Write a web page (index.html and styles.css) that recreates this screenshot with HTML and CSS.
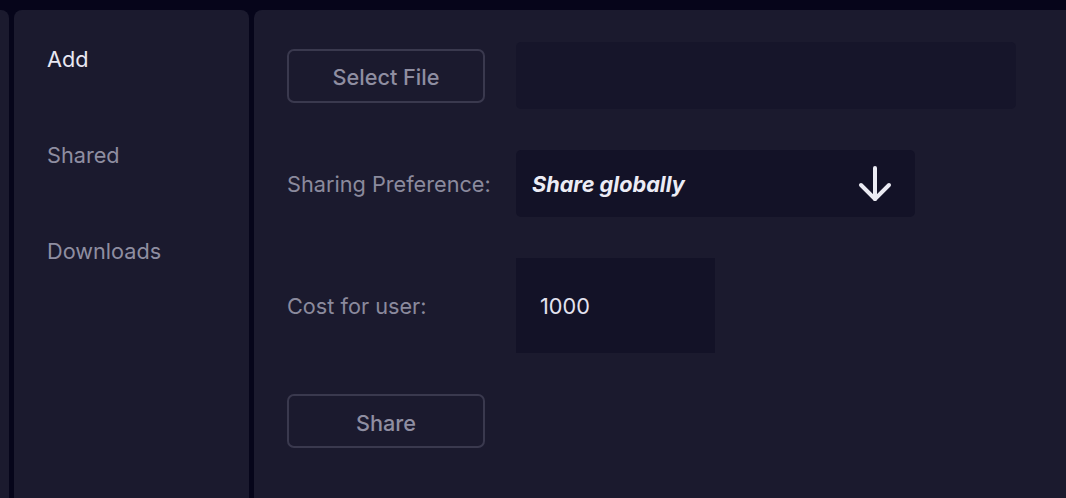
FILE: index.html
```html
<!DOCTYPE html>
<html>
<head>
<meta charset="utf-8">
<link rel="stylesheet" href="styles.css">
</head>
<body>
<div class="shell">
  <div class="card edge"></div>
  <nav class="card sidebar">
    <div class="nav-item active">Add</div>
    <div class="nav-item">Shared</div>
    <div class="nav-item">Downloads</div>
  </nav>
  <main class="card main">
    <div class="form">
      <button class="btn">Select File</button>
      <div class="file-box"></div>

      <label class="label">Sharing Preference:</label>
      <div class="select">
        <span class="select-text">Share globally</span>
        <svg class="arrow" width="34" height="36" viewBox="0 0 34 36" fill="none" stroke="#ebebf3" stroke-width="4" stroke-linecap="round" stroke-linejoin="round">
          <path d="M17 2 V33"/>
          <path d="M3 19 L17 33 L31 19"/>
        </svg>
      </div>

      <label class="label">Cost for user:</label>
      <div class="num-input">1000</div>

      <button class="btn">Share</button>
    </div>
  </main>
</div>
</body>
</html>
```

FILE: styles.css
```css
* { box-sizing: border-box; }
html, body {
  margin: 0;
  height: 100%;
  background: #06051a;
  font-family: Inter, "Noto Sans", sans-serif;
  overflow: hidden;
}
.shell {
  display: flex;
  gap: 5px;
  padding-top: 10px;
  height: 100%;
}
.card {
  background: #1b1a2e;
  border-radius: 8px 8px 0 0;
}
.edge {
  width: 9px;
  border-radius: 0 8px 0 0;
}
.sidebar {
  width: 235px;
  padding: 37px 0 0 33px;
  display: flex;
  flex-direction: column;
  gap: 72px;
}
.nav-item {
  font-size: 21.7px;
  line-height: 24px;
  color: #8f8ea1;
}
.nav-item.active {
  color: #e8e7f2;
}
.main {
  flex: 1;
  border-radius: 8px 0 0 0;
  padding: 32px 0 0 33px;
}
.form {
  display: grid;
  grid-template-columns: 198px max-content;
  column-gap: 31px;
  row-gap: 41px;
  align-items: center;
}
.btn {
  width: 198px;
  height: 54px;
  background: transparent;
  border: 2px solid #3a394e;
  border-radius: 7px;
  color: #8f8ea1;
  font-family: inherit;
  font-size: 21.7px;
  font-weight: 500;
  padding: 3px 0 0;
}
.file-box {
  width: 500px;
  height: 67px;
  background: #16152a;
  border-radius: 5px;
}
.label {
  font-size: 21.7px;
  color: #8b8a9d;
  white-space: nowrap;
}
.select {
  width: 399px;
  height: 67px;
  background: #131227;
  border-radius: 5px;
  display: flex;
  align-items: center;
  justify-content: space-between;
  padding: 0 23px 0 16px;
}
.select-text {
  font-size: 21.7px;
  font-weight: 700;
  font-style: italic;
  color: #ececf5;
}
.arrow {
  display: block;
}
.num-input {
  width: 199px;
  height: 95px;
  background: #131227;
  display: flex;
  align-items: center;
  padding-left: 24px;
  font-size: 21.7px;
  color: #e4e3f0;
}
```
